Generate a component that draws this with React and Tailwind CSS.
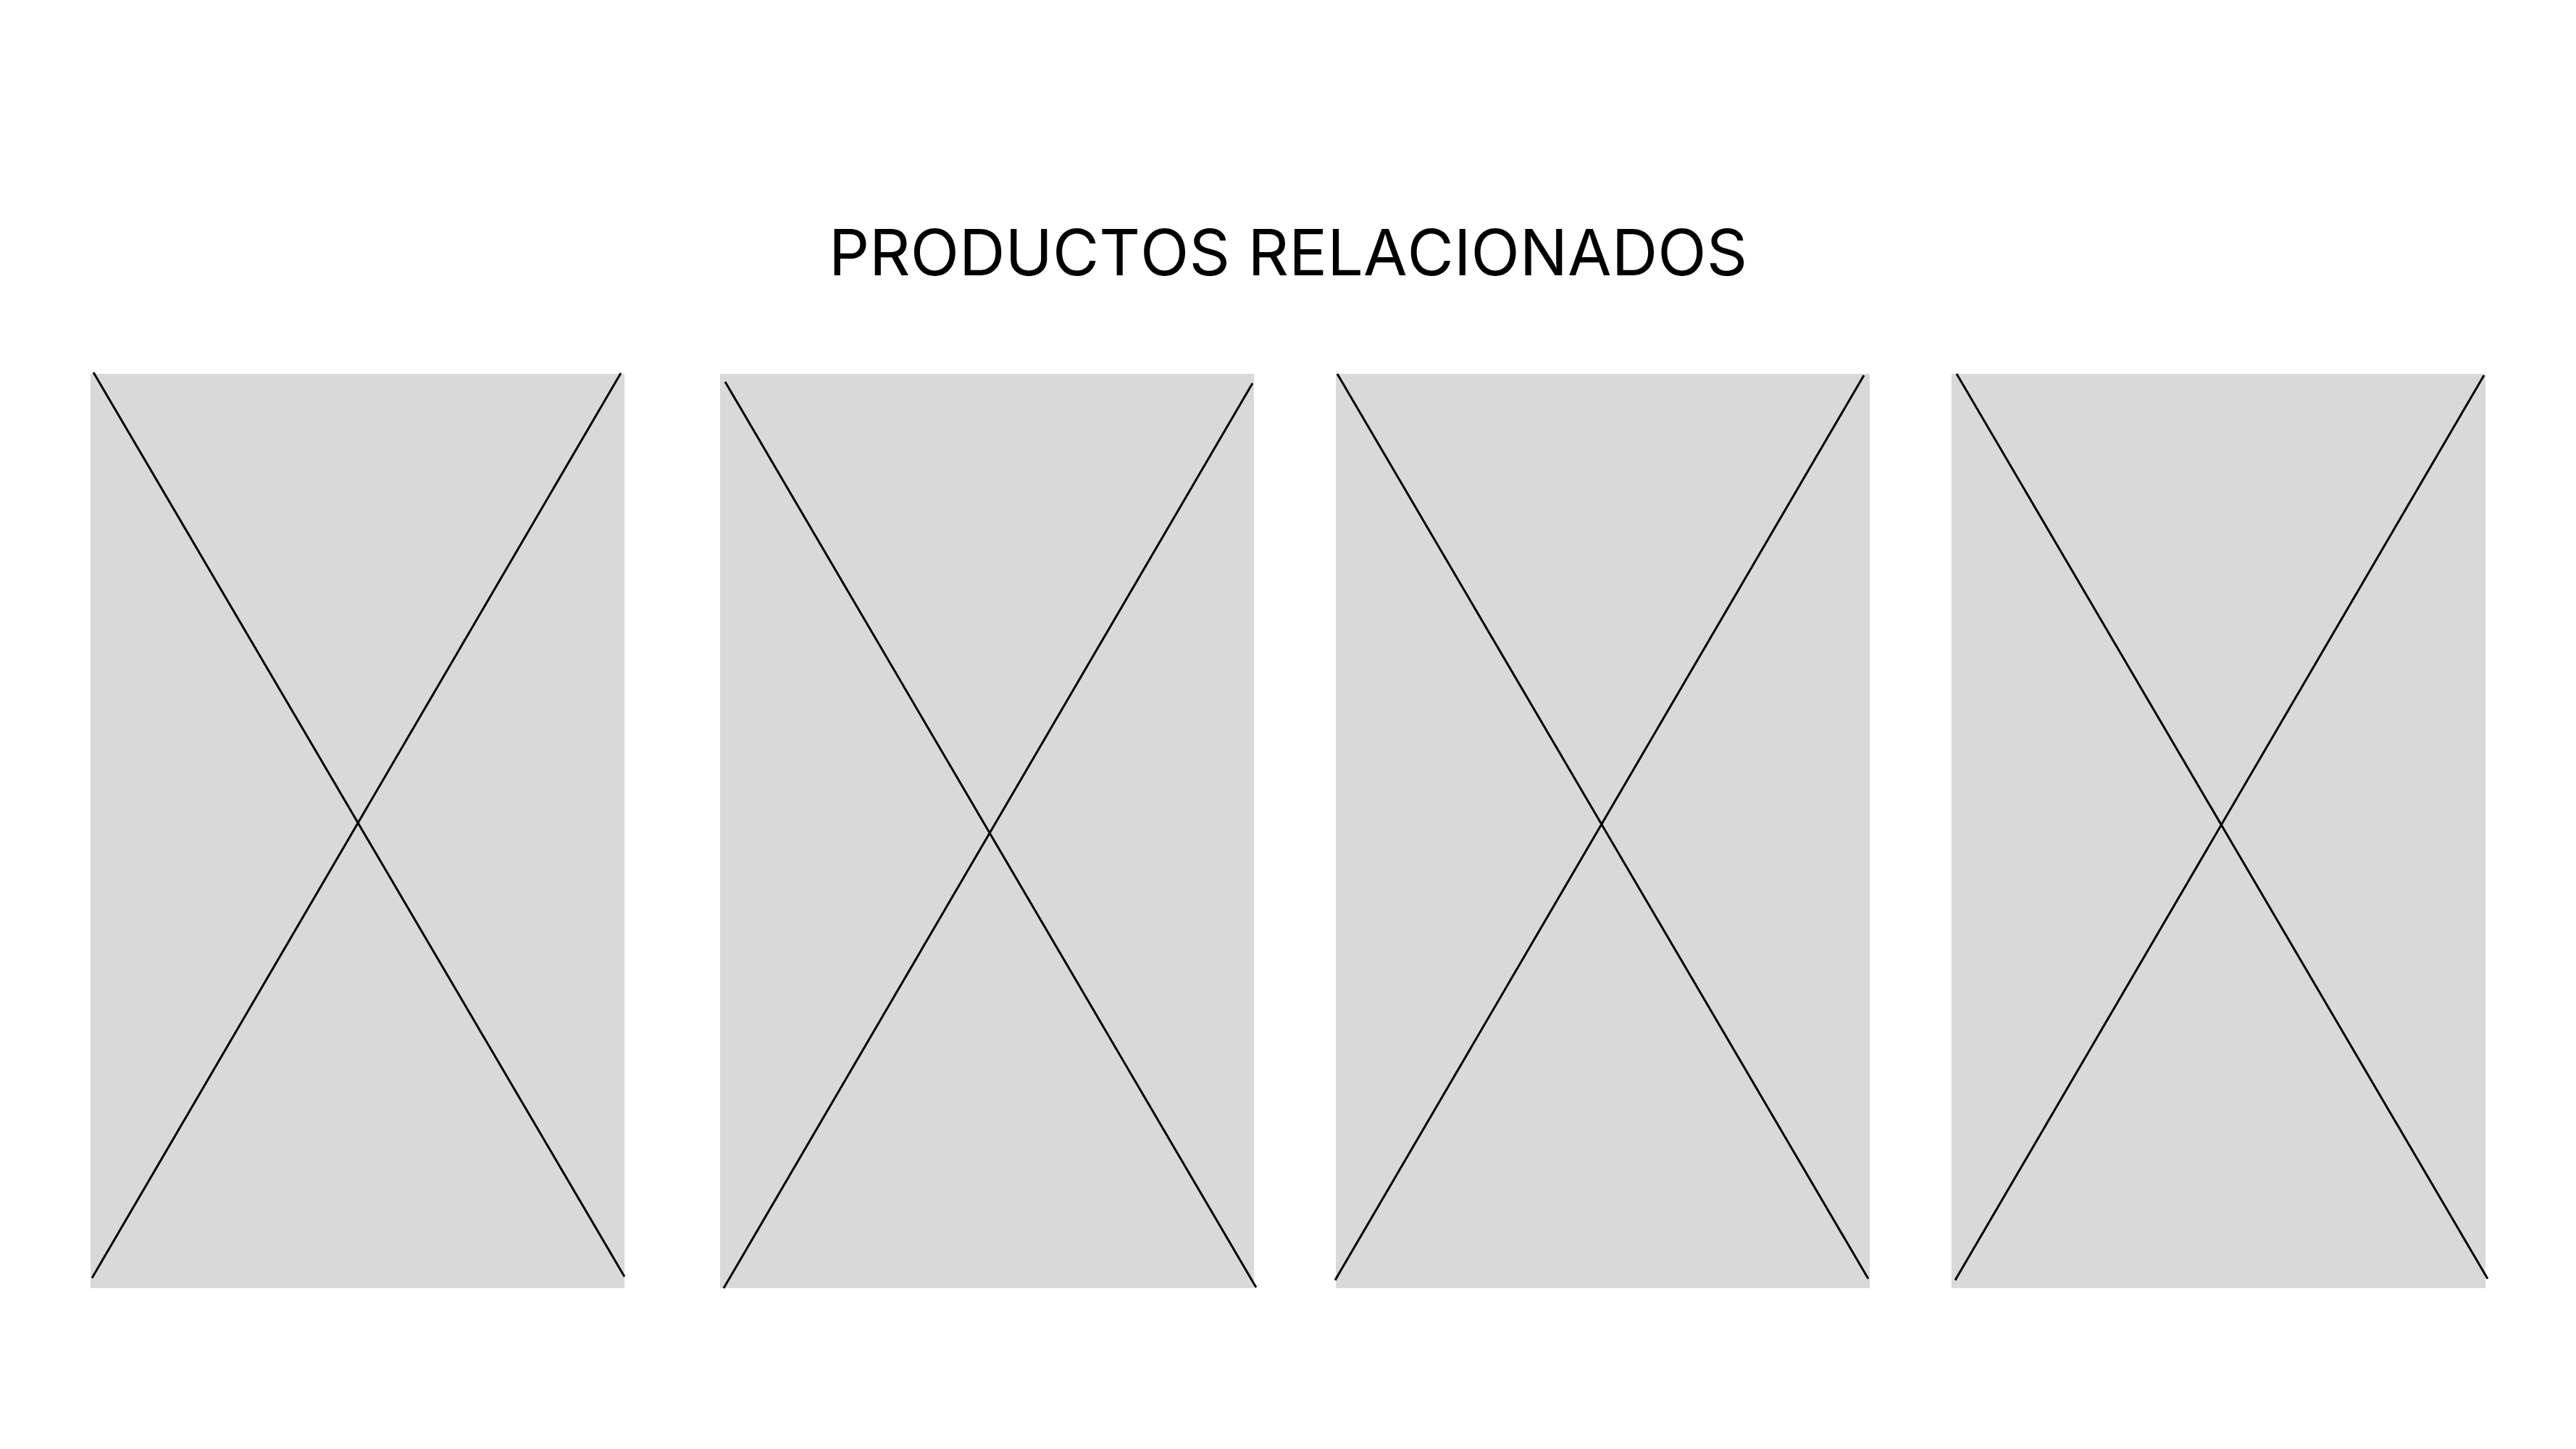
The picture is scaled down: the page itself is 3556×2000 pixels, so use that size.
const products = [
  { id: 1, spacing: "mr-[19px]", lines: [[4, -2, 737, 1246], [732, -1, 2, 1248]] },
  { id: 2, spacing: "", lines: [[7, 11, 740, 1261], [735, 13, 5, 1262]] },
  { id: 3, spacing: "", lines: [[2, 0, 735, 1249], [729, 2, -1, 1251]] },
  { id: 4, spacing: "", lines: [[7, 0, 740, 1249], [735, 2, 5, 1251]] },
];

function ProductPlaceholder({ id, spacing, lines }) {
  return (
    <li className={`min-w-0 flex-1 bg-[#d9d9d9] ${spacing}`}>
      <svg
        viewBox="0 0 737 1262"
        role="img"
        aria-label={`Producto ${id}`}
        className="block h-auto w-full overflow-visible stroke-black stroke-3"
      >
        {lines.map(([x1, y1, x2, y2]) => (
          <line key={x1} x1={x1} y1={y1} x2={x2} y2={y2} />
        ))}
      </svg>
    </li>
  );
}

export default function App() {
  return (
    <main className="min-h-screen bg-white px-[125px] pt-[294px] font-['Inter',sans-serif] text-black">
      <section aria-labelledby="related">
        <h2 id="related" className="text-center text-[88px] leading-[108px] font-normal [font-kerning:none]">
          PRODUCTOS RELACIONADOS
        </h2>
        <ul className="mt-[114px] flex gap-[113px]">
          {products.map((product) => (
            <ProductPlaceholder key={product.id} {...product} />
          ))}
        </ul>
      </section>
    </main>
  );
}
